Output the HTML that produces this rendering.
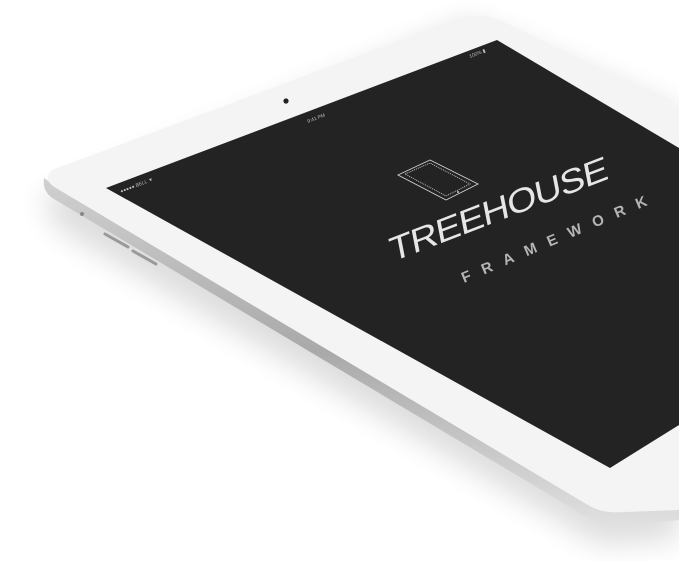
<!DOCTYPE html>
<html><head><meta charset="utf-8"><style>
html,body{margin:0;padding:0;background:#fff;width:679px;height:561px;overflow:hidden}
svg{display:block}
</style></head><body>
<svg width="679" height="561" viewBox="0 0 679 561" xmlns="http://www.w3.org/2000/svg">
<defs>
<filter id="sh" x="-20%" y="-20%" width="140%" height="140%"><feGaussianBlur stdDeviation="14"/></filter>
<linearGradient id="edge" x1="0" y1="0" x2="0" y2="1">
<stop offset="0" stop-color="#d0d0d0"/><stop offset="0.5" stop-color="#a9a9a9"/><stop offset="1" stop-color="#e0e0e0"/></linearGradient>
</defs>
<path d="M40 200 L470 20 L679 110 L679 540 L600 545 L60 230 Z" fill="#000" opacity="0.13" filter="url(#sh)"/>
<path d="M44 178 Q42 192 54 199 L585 516 Q605 528 640 524 L679 520 L679 508 L620 510 Q600 511 585 503 L58 188 Z" fill="url(#edge)"/>
<path d="M52 170 L455 20 Q478 12 500 20 L679 108 L679 510 L625 512 Q602 514 588 505 L56 188 Q42 180 52 170 Z" fill="#f4f4f4"/>
<path d="M105 234 L128 247" stroke="#999" stroke-width="3" stroke-linecap="round"/>
<path d="M133 251 L156 264" stroke="#999" stroke-width="3" stroke-linecap="round"/>
<circle cx="82" cy="214" r="2" fill="#888"/>
<path d="M106 188 L497 40 L679 148 L679 425 L610 468 Z" fill="#232324"/>
<circle cx="286" cy="101" r="2.6" fill="#222"/>
<text transform="translate(121,193) rotate(-21)" font-family="Liberation Sans,sans-serif" font-size="5" fill="#bbb">●●●●● BELL ▼</text>
<text transform="translate(308,123) rotate(-21)" font-family="Liberation Sans,sans-serif" font-size="5" fill="#bbb">9:41 PM</text>
<text transform="translate(470,58) rotate(-21)" font-family="Liberation Sans,sans-serif" font-size="5" fill="#bbb">100% ▮</text>
<g fill="none" stroke="#cfcfcf" stroke-width="0.9">
<path d="M398 175 L430 160 L478 184 L446 200 Z"/>
<path d="M405 174 L430 163 L470 184 L446 196 Z" stroke-dasharray="1 1"/>
</g>
<circle cx="458" cy="192" r="1" fill="#ccc"/>
<text transform="translate(392,262) rotate(-21) skewX(-10)" font-family="Liberation Sans,sans-serif" font-size="33" fill="#e6e6e6" letter-spacing="-1" textLength="232" lengthAdjust="spacingAndGlyphs">TREEHOUSE</text>
<text transform="translate(464,283) rotate(-23)" font-family="Liberation Sans,sans-serif" font-weight="bold" font-size="15" fill="#b5b5b5" textLength="200" lengthAdjust="spacing">FRAMEWORK</text>
</svg>
</body></html>
